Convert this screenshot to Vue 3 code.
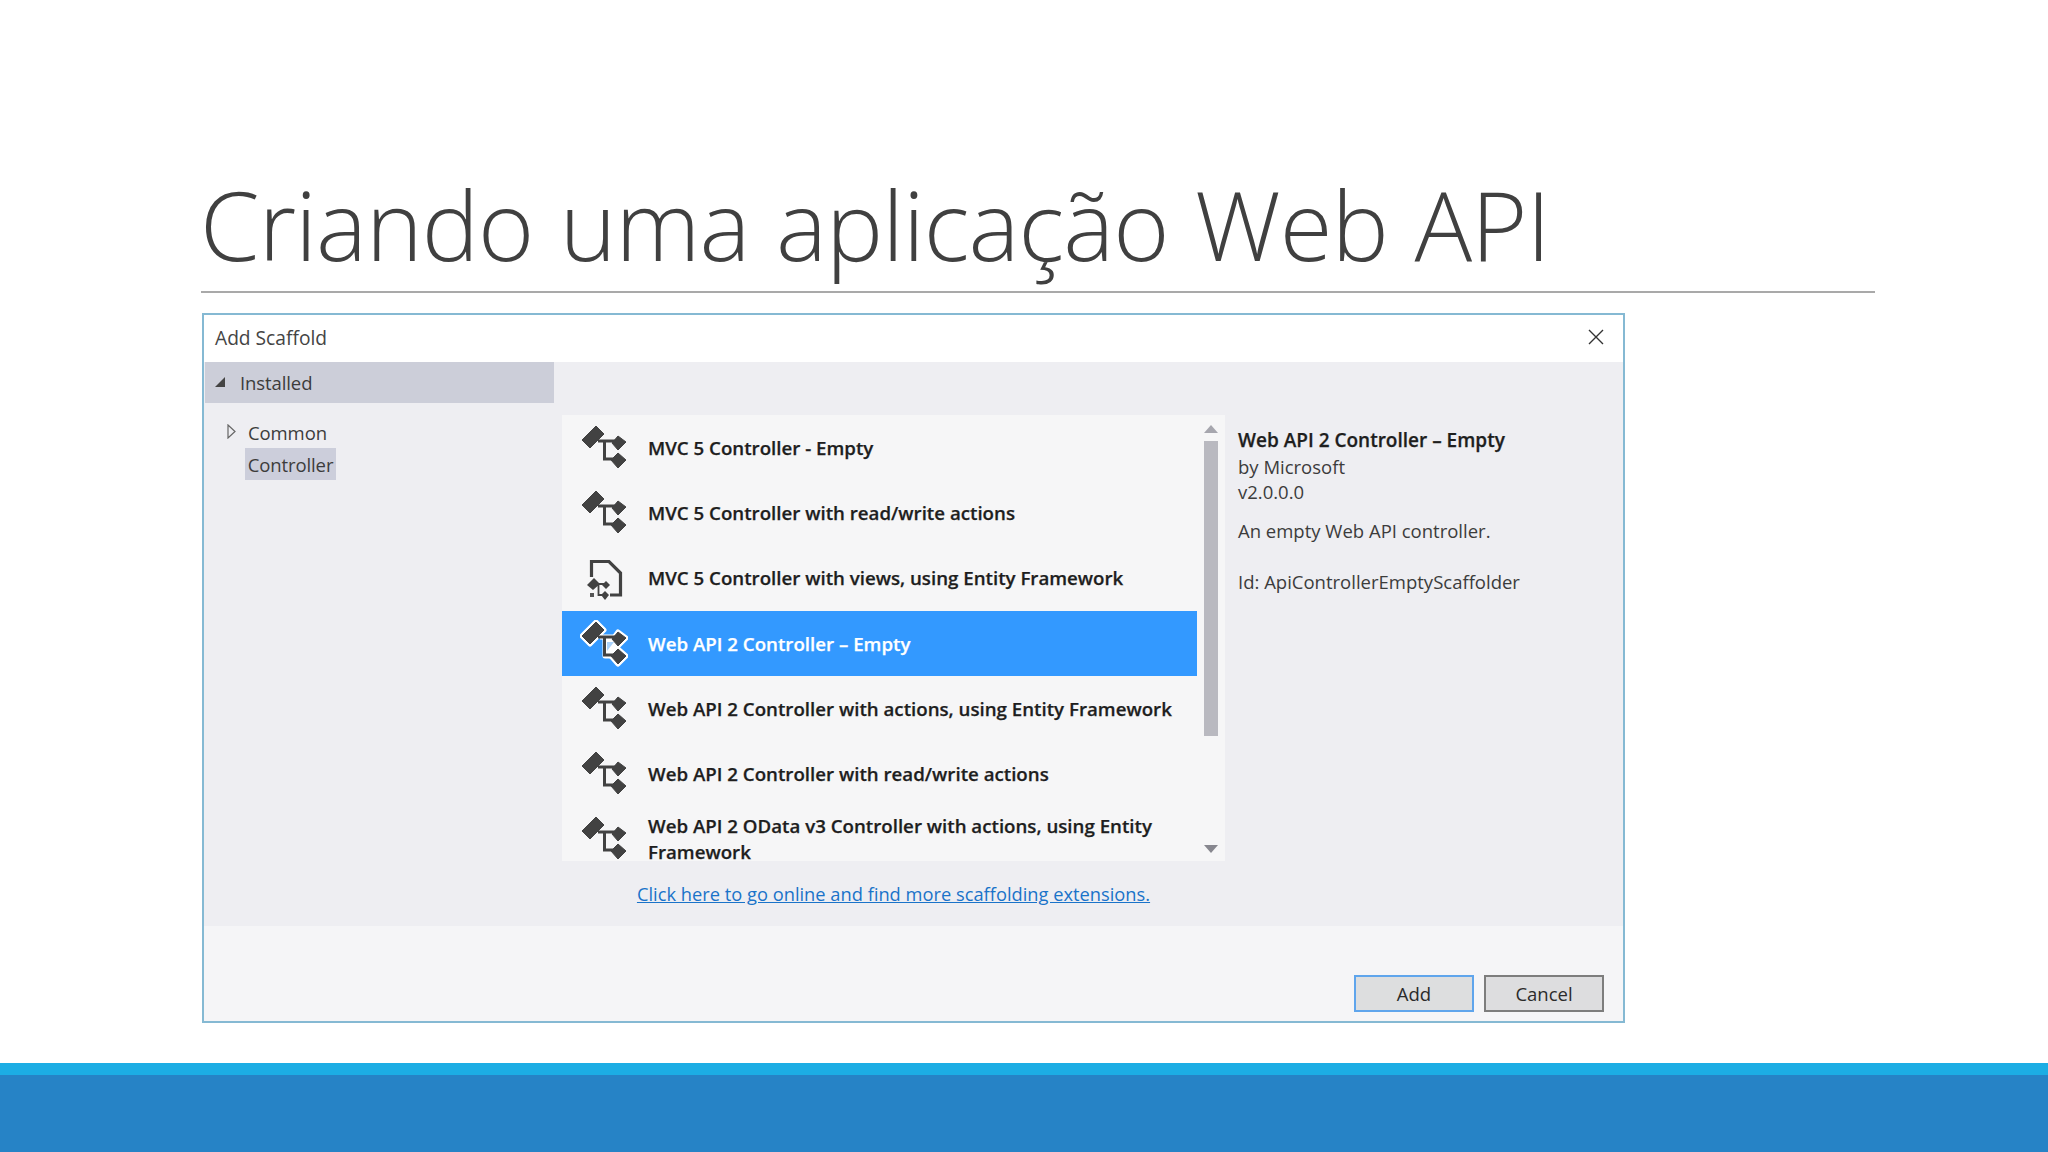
<script setup>
const items = [
  { icon: 'flow', lines: 'MVC 5 Controller - Empty' },
  { icon: 'flow', lines: 'MVC 5 Controller with read/write actions' },
  { icon: 'page', lines: 'MVC 5 Controller with views, using Entity Framework' },
  { icon: 'flow', lines: 'Web API 2 Controller – Empty', selected: true },
  { icon: 'flow', lines: 'Web API 2 Controller with actions, using Entity Framework' },
  { icon: 'flow', lines: 'Web API 2 Controller with read/write actions' },
  { icon: 'flow', lines: 'Web API 2 OData v3 Controller with actions, using Entity Framework' }
]
</script>

<template>
  <div class="slide">
    <header class="head">
      <h1 class="title">Criando uma aplicação Web API</h1>
      <div class="rule"></div>
    </header>

    <section class="dialog">
      <div class="titlebar">
        <span>Add Scaffold</span>
        <svg class="close" width="16" height="16" viewBox="0 0 16 16"><path d="M1 1 15 15M15 1 1 15" stroke="#333" stroke-width="1.4" fill="none" /></svg>
      </div>

      <div class="body">
        <aside class="tree">
          <div class="installed">
            <svg width="12" height="12" viewBox="0 0 12 12"><path d="M11 1V11H1Z" fill="#444" /></svg>
            <span>Installed</span>
          </div>
          <div class="tree-row common">
            <svg class="caret" width="9" height="15" viewBox="0 0 9 15"><path d="M1 1 8 7.5 1 14Z" fill="none" stroke="#666" stroke-width="1.2" /></svg>
            <span>Common</span>
          </div>
          <div class="controller"><span>Controller</span></div>
        </aside>

        <div class="center">
          <div class="listbox">
            <ul class="list">
              <li v-for="item in items" :key="item.lines" class="row" :class="{ selected: item.selected }">
                <svg v-if="item.icon === 'flow'" class="icon" width="48" height="48" viewBox="0 0 48 48">
                  <g v-if="item.selected" fill="#fff" stroke="#fff" stroke-width="5" stroke-linejoin="round">
                    <path d="M2 16 16 2 24 10 10 24Z" />
                    <path d="M33 19 38 12 46 18 38 26Z" />
                    <path d="M31 36 38 29 46 36 38 44Z" />
                    <path d="M20 17H36M25 18V36H36" fill="none" />
                    <path d="M26 19H36V34H26Z" />
                  </g>
                  <path v-if="item.selected" d="M27 22H34L27 31Z" fill="#a9d2fb" />
                  <g fill="#424242" stroke="#424242" stroke-width="1" stroke-linejoin="round">
                    <path d="M2 16 16 2 24 10 10 24Z" />
                    <path d="M32 19 38 12 46 18 38 26Z" />
                    <path d="M31 36 38 29 46 36 38 44Z" />
                  </g>
                  <path d="M18 17H36M24.500 17V35H35" fill="none" stroke="#424242" stroke-width="3" />
                </svg>
                <svg v-else class="icon" width="48" height="48" viewBox="0 0 48 48">
                  <path d="M11.500 23V7.500H29L40.500 19V41H30" fill="none" stroke="#424242" stroke-width="3.200" />
                  <path d="M7 31 14 24 20 30 13 36Z" fill="#424242" />
                  <path d="M22 31 26 27 30 31 26 35Z" fill="#424242" />
                  <path d="M21 41 25 37 29 41 25 46Z" fill="#424242" />
                  <path d="M15 30H26M18.500 30V41H25" fill="none" stroke="#424242" stroke-width="1.800" />
                  <path d="M10 39H14V43H10Z" fill="#555" />
                </svg>
                <span class="label">{{ item.lines }}</span>
              </li>
            </ul>
            <div class="scrollbar">
              <svg width="14" height="8" viewBox="0 0 14 8"><path d="M0 8 7 0 14 8Z" fill="#a6a6ae" /></svg>
              <div class="track"><div class="thumb"></div></div>
              <svg width="14" height="8" viewBox="0 0 14 8"><path d="M0 0 7 8 14 0Z" fill="#87878f" /></svg>
            </div>
          </div>
          <a class="link">Click here to go online and find more scaffolding extensions.</a>
        </div>

        <div class="details">
          <strong>Web API 2 Controller – Empty</strong>
          <span>by Microsoft</span>
          <span>v2.0.0.0</span>
          <span class="desc">An empty Web API controller.</span>
          <span class="ident">Id: ApiControllerEmptyScaffolder</span>
        </div>
      </div>

      <footer class="foot">
        <button class="btn primary">Add</button>
        <button class="btn">Cancel</button>
      </footer>
    </section>

    <div class="band">
      <div class="band-top"></div>
      <div class="band-main"></div>
    </div>
  </div>
</template>

<style scoped>
.slide {
  width: 2048px;
  height: 1152px;
  background: #fff;
  display: flex;
  flex-direction: column;
  overflow: hidden;
  font-family: "Open Sans", "Liberation Sans", sans-serif;
  color: #333;
}
.head {
  padding: 163px 173px 0 201px;
}
.title {
  margin: 0 0 0 -1px;
  height: 128px;
  font-size: 96px;
  line-height: 122px;
  font-weight: 300;
  color: #404040;
  white-space: nowrap;
  letter-spacing: -0.9px;
  word-spacing: 2.5px;
}
.rule {
  height: 2px;
  background: #a9a9a9;
}
.dialog {
  width: 1423px;
  height: 710px;
  margin: 20px 0 0 202px;
  box-sizing: border-box;
  border: 2px solid #85b9d3;
  display: flex;
  flex-direction: column;
  background: #f5f5f7;
}
.titlebar {
  height: 47px;
  flex: none;
  box-sizing: border-box;
  background: #fff;
  display: flex;
  align-items: center;
  justify-content: space-between;
  padding: 0 19px 3px 11px;
  font-size: 19.200px;
  color: #444;
}
.body {
  height: 564px;
  flex: none;
  background: #eeeef2;
  display: flex;
}
.tree {
  width: 349px;
  flex: none;
  padding-left: 1px;
  font-size: 18.500px;
  letter-spacing: -0.1px;
}
.installed {
  height: 41px;
  box-sizing: border-box;
  background: #ccced9;
  display: flex;
  align-items: center;
  gap: 14px;
  padding: 0 0 1px 9px;
  color: #3c3c3c;
}
.tree-row {
  display: flex;
  align-items: center;
  gap: 12px;
}
.caret {
  margin-top: -2px;
}
.common {
  height: 32px;
  margin-top: 13px;
  padding-left: 22px;
  color: #3c3c3c;
}
.controller {
  margin-left: 40px;
  width: 91px;
  height: 32px;
  background: #cccedb;
  display: flex;
  align-items: center;
  justify-content: center;
  color: #3c3c3c;
}
.center {
  width: 675px;
  flex: none;
  padding-left: 8px;
  box-sizing: border-box;
}
.listbox {
  margin-top: 53px;
  width: 663px;
  height: 446px;
  background: #f6f6f7;
  display: flex;
}
.list {
  list-style: none;
  margin: 0;
  padding: 0;
  width: 635px;
  flex: none;
}
.row {
  height: 65.300px;
  display: flex;
  align-items: center;
  gap: 20px;
  padding: 0 14px 0 18px;
  font-size: 18.700px;
  font-weight: 600;
  line-height: 26px;
  color: #1e1e1e;
  -webkit-text-stroke: 0.25px currentColor;
  box-sizing: border-box;
}
.row.selected {
  background: #3399ff;
  color: #fff;
}
.icon {
  flex: none;
}
.scrollbar {
  width: 28px;
  padding-top: 10px;
  display: flex;
  flex-direction: column;
  align-items: center;
  box-sizing: border-box;
}
.track {
  height: 412px;
  padding-top: 8px;
  box-sizing: border-box;
}
.thumb {
  width: 14px;
  height: 295px;
  background: #b9b9c0;
}
.link {
  display: block;
  margin-top: 20px;
  text-align: center;
  width: 663px;
  font-size: 18.300px;
  color: #1a73c9;
  text-decoration: underline;
}
.details {
  padding: 66px 0 0 9px;
  display: flex;
  flex-direction: column;
  font-size: 18.500px;
  line-height: 25.500px;
  color: #3c3c3c;
}
.details strong {
  font-weight: 600;
  font-size: 19px;
  color: #1e1e1e;
  -webkit-text-stroke: 0.25px currentColor;
}
.desc {
  margin-top: 13px;
}
.ident {
  margin-top: 26px;
}
.foot {
  flex: 1;
  display: flex;
  justify-content: flex-end;
  align-items: flex-end;
  gap: 10px;
  padding: 0 19px 9px 0;
}
.btn {
  width: 120px;
  height: 37px;
  padding: 0;
  border: 2px solid #7d7d7d;
  background: #dddddf;
  font-family: inherit;
  font-size: 18.500px;
  color: #2b2b2b;
}
.btn.primary {
  border-color: #5fa5ec;
  background: #dddedf;
}
.band {
  margin-top: auto;
  flex: none;
}
.band-top {
  height: 12px;
  background: #1cade4;
}
.band-main {
  height: 77px;
  background: #2683c6;
}
</style>
